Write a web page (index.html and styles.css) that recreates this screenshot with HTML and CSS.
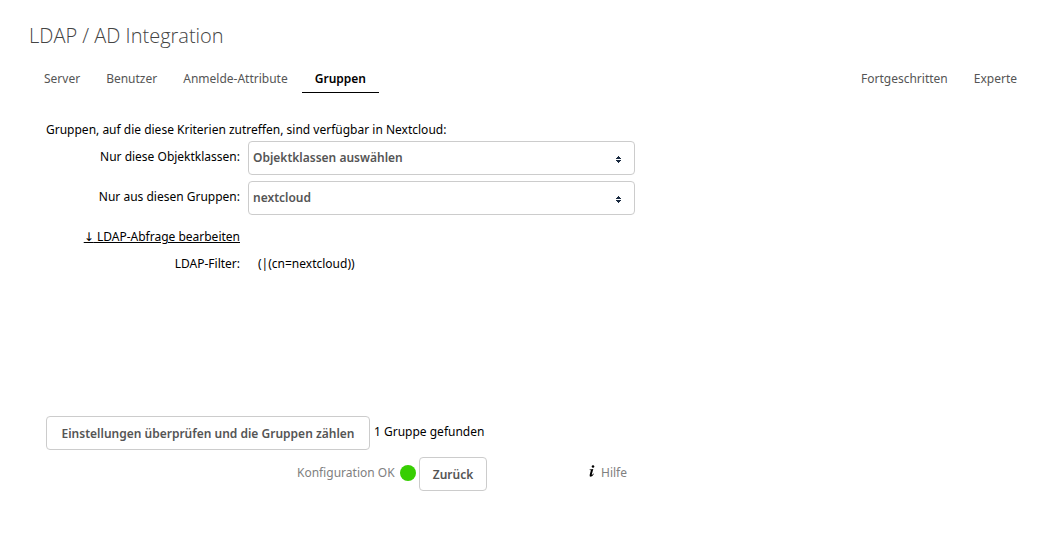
FILE: index.html
```html
<!DOCTYPE html>
<html lang="de">
<head>
<meta charset="utf-8">
<title>LDAP / AD Integration</title>
<link rel="stylesheet" href="styles.css">
</head>
<body>
<main class="section">
  <h2 class="title">LDAP / AD Integration</h2>
  <nav class="tabs">
    <a class="tab" href="#server">Server</a>
    <a class="tab" href="#benutzer">Benutzer</a>
    <a class="tab" href="#attribute">Anmelde-Attribute</a>
    <a class="tab active" href="#gruppen" aria-current="page">Gruppen</a>
    <a class="tab push" href="#fortgeschritten">Fortgeschritten</a>
    <a class="tab" href="#experte">Experte</a>
  </nav>
  <form class="panel">
    <p class="intro">Gruppen, auf die diese Kriterien zutreffen, sind verfügbar in Nextcloud:</p>
    <div class="row">
      <label class="label" for="classes">Nur diese Objektklassen:</label>
      <div class="picker">
        <select class="select" id="classes"><option>Objektklassen auswählen</option></select>
        <svg class="arrows" viewBox="0 0 5 7" aria-hidden="true"><path d="M2 0h1v1h1v1h1v1H0V2h1V1h1zM0 4h5v1H4v1H3v1H2V6H1V5H0z"/></svg>
      </div>
    </div>
    <div class="row">
      <label class="label" for="groups">Nur aus diesen Gruppen:</label>
      <div class="picker">
        <select class="select" id="groups"><option>nextcloud</option></select>
        <svg class="arrows" viewBox="0 0 5 7" aria-hidden="true"><path d="M2 0h1v1h1v1h1v1H0V2h1V1h1zM0 4h5v1H4v1H3v1H2V6H1V5H0z"/></svg>
      </div>
    </div>
    <div class="row edit"><a class="label link" href="#abfrage"><span class="down">↓</span> LDAP-Abfrage bearbeiten</a></div>
    <div class="row filter"><span class="label">LDAP-Filter:</span><span class="value">(|(cn=nextcloud))</span></div>
    <div class="check">
      <button class="button wide" type="button">Einstellungen überprüfen und die Gruppen zählen</button>
      <span>1 Gruppe gefunden</span>
    </div>
    <div class="footer">
      <span class="muted config">Konfiguration OK</span>
      <span class="status"></span>
      <button class="button back" type="button">Zurück</button>
      <a class="help muted" href="#hilfe"><svg class="info" viewBox="0 0 6 12" aria-hidden="true"><circle cx="4" cy="1.5" r="1.3"/><path d="M.6 4.6L4.3 4 2.7 9.8Q3.5 9.8 4.6 8.5L5 8.8Q3.5 11.7 1.7 11.7.2 11.6.7 9.8L1.9 5.3.6 5z"/></svg>Hilfe</a>
    </div>
  </form>
</main>
</body>
</html>
```
FILE: styles.css
```css
* { box-sizing: border-box; }
body {
  margin: 0;
  background: #fff;
  color: #000;
  font: 12px/20px "Noto Sans", "Open Sans", sans-serif;
}
a { color: inherit; text-decoration: none; }
.section { padding: 22px 21px 60px 29px; }
.title {
  margin: 0 0 14px;
  font: 300 20px/28px "Open Sans", sans-serif;
  color: #444;
}
.tabs { display: flex; gap: 2px; padding-left: 3px; }
.tab {
  padding: 5px 12px 3px;
  color: #555;
  border-bottom: 1px solid transparent;
}
.tab.active {
  padding-left: 13px;
  padding-right: 13px;
  color: #000;
  font-weight: 600;
  border-color: #000;
}
.push { margin-left: auto; }
.panel { max-width: 606px; padding: 27px 0 0 17px; }
.intro { margin: 0 0 1px; }
.row { display: flex; margin-bottom: 6px; }
.label { width: 194px; margin-right: 8px; text-align: right; line-height: 32px; }
.picker { position: relative; flex: 1; }
.select {
  display: block;
  width: 100%;
  height: 34px;
  padding: 0 4px;
  appearance: none;
  border: 1px solid #ccc;
  border-radius: 4px;
  background: #fff;
  color: #555;
  font: 600 12px/20px "Noto Sans", "Open Sans", sans-serif;
}
.arrows { position: absolute; right: 14px; top: 15px; width: 5px; height: 7px; fill: #1a2a40; }
.edit { margin: 0; }
.link { text-decoration: underline; }
.down { font-family: "DejaVu Sans", sans-serif; }
.filter { margin: 0; }
.filter, .filter .label { line-height: 22px; }
.value { padding-left: 10px; }
.check { display: flex; gap: 4px; margin-top: 141px; line-height: 32px; }
.button {
  height: 34px;
  padding: 2px 12px 0;
  border: 1px solid #ccc;
  border-radius: 4px;
  background: #fff;
  color: #555;
  font: 600 12px/20px "Noto Sans", "Open Sans", sans-serif;
}
.wide { min-width: 324px; }
.back { min-width: 68px; }
.footer { display: flex; margin-top: 7px; padding: 0 8px 0 251px; line-height: 32px; }
.muted { color: #808080; }
.config { min-width: 100px; }
.status { width: 16px; height: 16px; margin: 8px 3px 0; border-radius: 50%; background: #37ce02; }
.help { margin-left: auto; }
.info { width: 6px; height: 12px; margin-right: 6px; fill: #000; }
```
